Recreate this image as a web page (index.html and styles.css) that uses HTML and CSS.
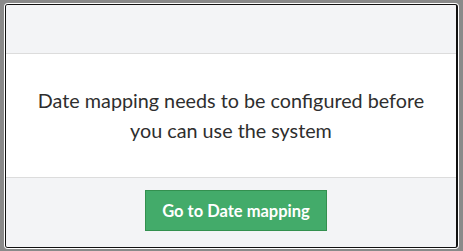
FILE: index.html
```html
<!DOCTYPE html>
<html lang="en">
<head>
    <meta charset="UTF-8">
    <title>Date mapping</title>
    <link rel="stylesheet" href="styles.css">
</head>
<body>
    <div class="modal">
        <div class="modal-header"></div>
        <div class="modal-body">
            <p>Date mapping needs to be configured before you can use the system</p>
        </div>
        <div class="modal-footer">
            <button class="btn-go">Go to Date mapping</button>
        </div>
    </div>
</body>
</html>
```

FILE: styles.css
```css
body {
    margin: 0;
    padding: 4px 0 0 5px;
    background: #8a8a8a;
    font-family: Lato, "Open Sans", sans-serif;
    height: 251px;
    box-sizing: border-box;
    overflow: hidden;
}

.modal {
    width: 453px;
    height: 244px;
    box-sizing: border-box;
    border: 1px solid #111;
    border-right-width: 2px;
    border-radius: 3px;
    box-shadow: 0 0 0 1px #fff;
    background: #fff;
    display: flex;
    flex-direction: column;
    overflow: hidden;
}

.modal-header {
    height: 48px;
    background: #f3f4f6;
    border-bottom: 1px solid #dcdcdc;
}

.modal-body {
    height: 123px;
    display: flex;
    align-items: center;
    justify-content: center;
    border-bottom: 1px solid #dcdcdc;
}

.modal-body p {
    margin: 0;
    padding: 0 24px;
    text-align: center;
    font-size: 19.75px;
    line-height: 30px;
    color: #2e2e2e;
}

.modal-footer {
    flex: 1;
    background: #f3f4f6;
    display: flex;
    justify-content: center;
    padding-top: 12px;
    align-items: flex-start;
}

.btn-go {
    width: 182px;
    height: 41px;
    margin-left: 10px;
    background: #43ab6a;
    border: 1px solid #33904f;
    color: #fff;
    font-family: Lato, sans-serif;
    font-weight: bold;
    font-size: 16.5px;
    cursor: pointer;
}
```
